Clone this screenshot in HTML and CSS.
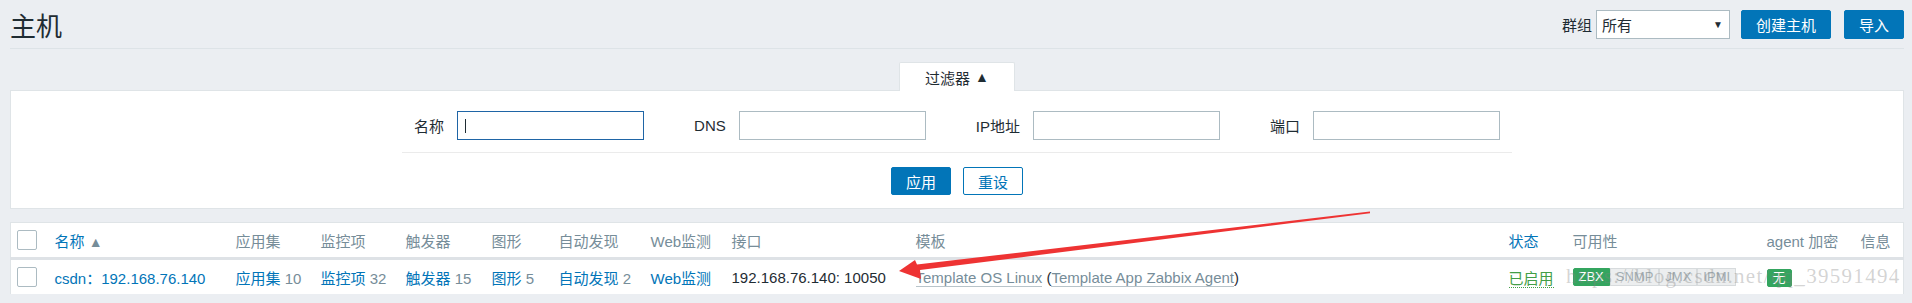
FILE: index.html
```html
<!DOCTYPE html>
<html lang="zh-CN">
<head>
  <meta charset="UTF-8">
  <title>主机</title>
  <link rel="stylesheet" href="styles.css">
</head>
<body>
  <header class="header">
    <h1>主机</h1>
    <div class="controls">
      <label class="group-label">群组</label>
      <div class="select"><span>所有</span><span class="caret">▼</span></div>
      <button class="btn btn-create">创建主机</button>
      <button class="btn">导入</button>
    </div>
  </header>

  <div class="filter">
    <div class="filter-tab">过滤器 <span class="tri">▲</span></div>
    <div class="filter-panel">
      <div class="filter-row">
        <div class="field"><label>名称</label><input type="text" class="focused"></div>
        <div class="field"><label>DNS</label><input type="text"></div>
        <div class="field"><label>IP地址</label><input type="text"></div>
        <div class="field"><label>端口</label><input type="text"></div>
      </div>
      <div class="filter-actions">
        <button class="btn btn-sm">应用</button>
        <button class="btn btn-sm btn-alt">重设</button>
      </div>
    </div>
  </div>

  <table class="hosts">
    <colgroup>
      <col style="width:38px"><col style="width:181px"><col style="width:85px"><col style="width:85px">
      <col style="width:86px"><col style="width:67px"><col style="width:92px"><col style="width:81px">
      <col style="width:184px"><col style="width:593px"><col style="width:64px"><col style="width:194px">
      <col style="width:94px"><col>
    </colgroup>
    <thead>
      <tr>
        <th><span class="cb"></span></th>
        <th><a class="link">名称</a> <span class="sort">▲</span></th>
        <th>应用集</th>
        <th>监控项</th>
        <th>触发器</th>
        <th>图形</th>
        <th>自动发现</th>
        <th>Web监测</th>
        <th>接口</th>
        <th>模板</th>
        <th><a class="link">状态</a></th>
        <th>可用性</th>
        <th>agent 加密</th>
        <th>信息</th>
      </tr>
    </thead>
    <tbody>
      <tr>
        <td><span class="cb"></span></td>
        <td><a class="link">csdn：192.168.76.140</a></td>
        <td><a class="link">应用集</a> <span class="count">10</span></td>
        <td><a class="link">监控项</a> <span class="count">32</span></td>
        <td><a class="link">触发器</a> <span class="count">15</span></td>
        <td><a class="link">图形</a> <span class="count">5</span></td>
        <td><a class="link">自动发现</a> <span class="count">2</span></td>
        <td><a class="link">Web监测</a></td>
        <td>192.168.76.140: 10050</td>
        <td><a class="tpl">Template OS Linux</a> (<a class="tpl">Template App Zabbix Agent</a>)</td>
        <td><a class="enabled">已启用</a></td>
        <td>
          <div class="badges">
            <span class="badge green">ZBX</span><span class="badge grey">SNMP</span><span class="badge grey">JMX</span><span class="badge grey">IPMI</span>
          </div>
        </td>
        <td><span class="badge green">无</span></td>
        <td></td>
      </tr>
    </tbody>
  </table>

  <div class="watermark">https://blog.csdn.net/qq_39591494</div>

  <svg class="arrow" width="1912" height="303" viewBox="0 0 1912 303">
    <polygon points="899,271 915,260 917,264.5 1370,211.5 1370,213.2 920,270 921,279" fill="#ee3333"/>
  </svg>
</body>
</html>
```

FILE: styles.css
```css
* {
  box-sizing: border-box;
}
body {
  margin: 0;
  padding: 0 8px 0 10px;
  background: #ebeef2;
  color: #1f2c33;
  font-family: "Liberation Sans", "Noto Sans CJK SC", sans-serif;
  font-size: 15px;
  overflow: hidden;
}
.header {
  display: flex;
  justify-content: space-between;
  align-items: center;
  height: 49px;
  border-bottom: 1px solid #dde3e7;
}
h1 {
  margin: 0;
  font-size: 26px;
  font-weight: normal;
  color: #1f2c33;
}
.controls {
  display: flex;
  align-items: center;
}
.group-label {
  margin-right: 4px;
}
.select {
  display: flex;
  justify-content: space-between;
  align-items: center;
  width: 134px;
  height: 29px;
  padding: 0 6px 0 5px;
  margin-right: 11px;
  background: #fff;
  border: 1px solid #acbbc2;
}
.select .caret {
  font-size: 10px;
  color: #1f2c33;
}
.btn {
  height: 29px;
  padding: 0 14px;
  background: #0275b8;
  border: 1px solid #0275b8;
  border-radius: 2px;
  color: #fff;
  font-family: inherit;
  font-size: 15px;
  cursor: pointer;
}
.btn-create {
  margin-right: 13px;
}
.btn-sm {
  height: 28px;
}
.btn-alt {
  background: #fff;
  color: #0275b8;
}

.filter {
  margin-top: 13px;
}
.filter-tab {
  position: relative;
  display: flex;
  justify-content: center;
  align-items: center;
  gap: 5px;
  width: 116px;
  height: 29px;
  margin: 0 auto -1px;
  background: #fff;
  border: 1px solid #dfe4e7;
  border-bottom: 0;
  border-radius: 2px 2px 0 0;
}
.filter-tab .tri {
  font-size: 14px;
}
.filter-panel {
  background: #fff;
  border: 1px solid #dfe4e7;
  padding-bottom: 13px;
}
.filter-row {
  display: flex;
  justify-content: center;
  gap: 50px;
  width: 1110px;
  margin: 0 auto;
  padding: 20px 0 12px;
  border-bottom: 1px solid #ebebeb;
}
.field {
  display: flex;
  align-items: center;
  gap: 13px;
}
.field input {
  width: 187px;
  height: 29px;
  padding: 0 6px;
  border: 1px solid #acbbc2;
  font-family: inherit;
  font-size: 15px;
  outline: none;
}
.field input.focused {
  border-color: #1f65a6;
  background: linear-gradient(#1f2c33, #1f2c33) no-repeat 7px 7px / 1px 14px, #fff;
}
.filter-actions {
  display: flex;
  justify-content: center;
  gap: 12px;
  margin-top: 14px;
}

.hosts {
  width: 100%;
  margin-top: 13px;
  table-layout: fixed;
  border-collapse: collapse;
  background: #fff;
  border: 1px solid #dfe4e7;
}
.hosts th,
.hosts td {
  height: 36px;
  padding: 0 6px;
  text-align: left;
  vertical-align: middle;
  white-space: nowrap;
}
.hosts th {
  font-weight: normal;
  color: #768d99;
  border-bottom: 3px solid #dee2e6;
}
.hosts td {
  border-bottom: 1px solid #ebeef2;
}
.cb {
  display: block;
  width: 20px;
  height: 20px;
  border: 1px solid #acbbc2;
  border-radius: 2px;
  background: #fff;
}
.link {
  color: #0275b8;
  text-decoration: none;
}
.sort {
  font-size: 14px;
  color: #768d99;
}
.count {
  color: #768d99;
}
.tpl {
  color: #768d99;
  border-bottom: 1px solid #b8c4ca;
}
.enabled {
  color: #429e47;
  border-bottom: 1px dotted #429e47;
}
.badges {
  display: flex;
}
.badge {
  display: inline-block;
  height: 18px;
  line-height: 16px;
  padding: 0 5px;
  border: 1px solid transparent;
  border-radius: 2px;
  font-size: 13px;
}
.badge.green {
  background: #34a55f;
  border-color: #34a55f;
  color: #fff;
}
.badge.grey {
  background: #eceeef;
  border-color: #d7dbdd;
  color: #a3adb2;
  border-radius: 0;
}
.badges .badge.green {
  border-radius: 2px 0 0 2px;
}

.watermark {
  position: absolute;
  left: 1566px;
  top: 264px;
  font-family: "Liberation Serif", serif;
  font-size: 21px;
  letter-spacing: 1.3px;
  color: rgba(130, 130, 130, 0.35);
  pointer-events: none;
}
.arrow {
  position: absolute;
  left: 0;
  top: 0;
  pointer-events: none;
}
```
